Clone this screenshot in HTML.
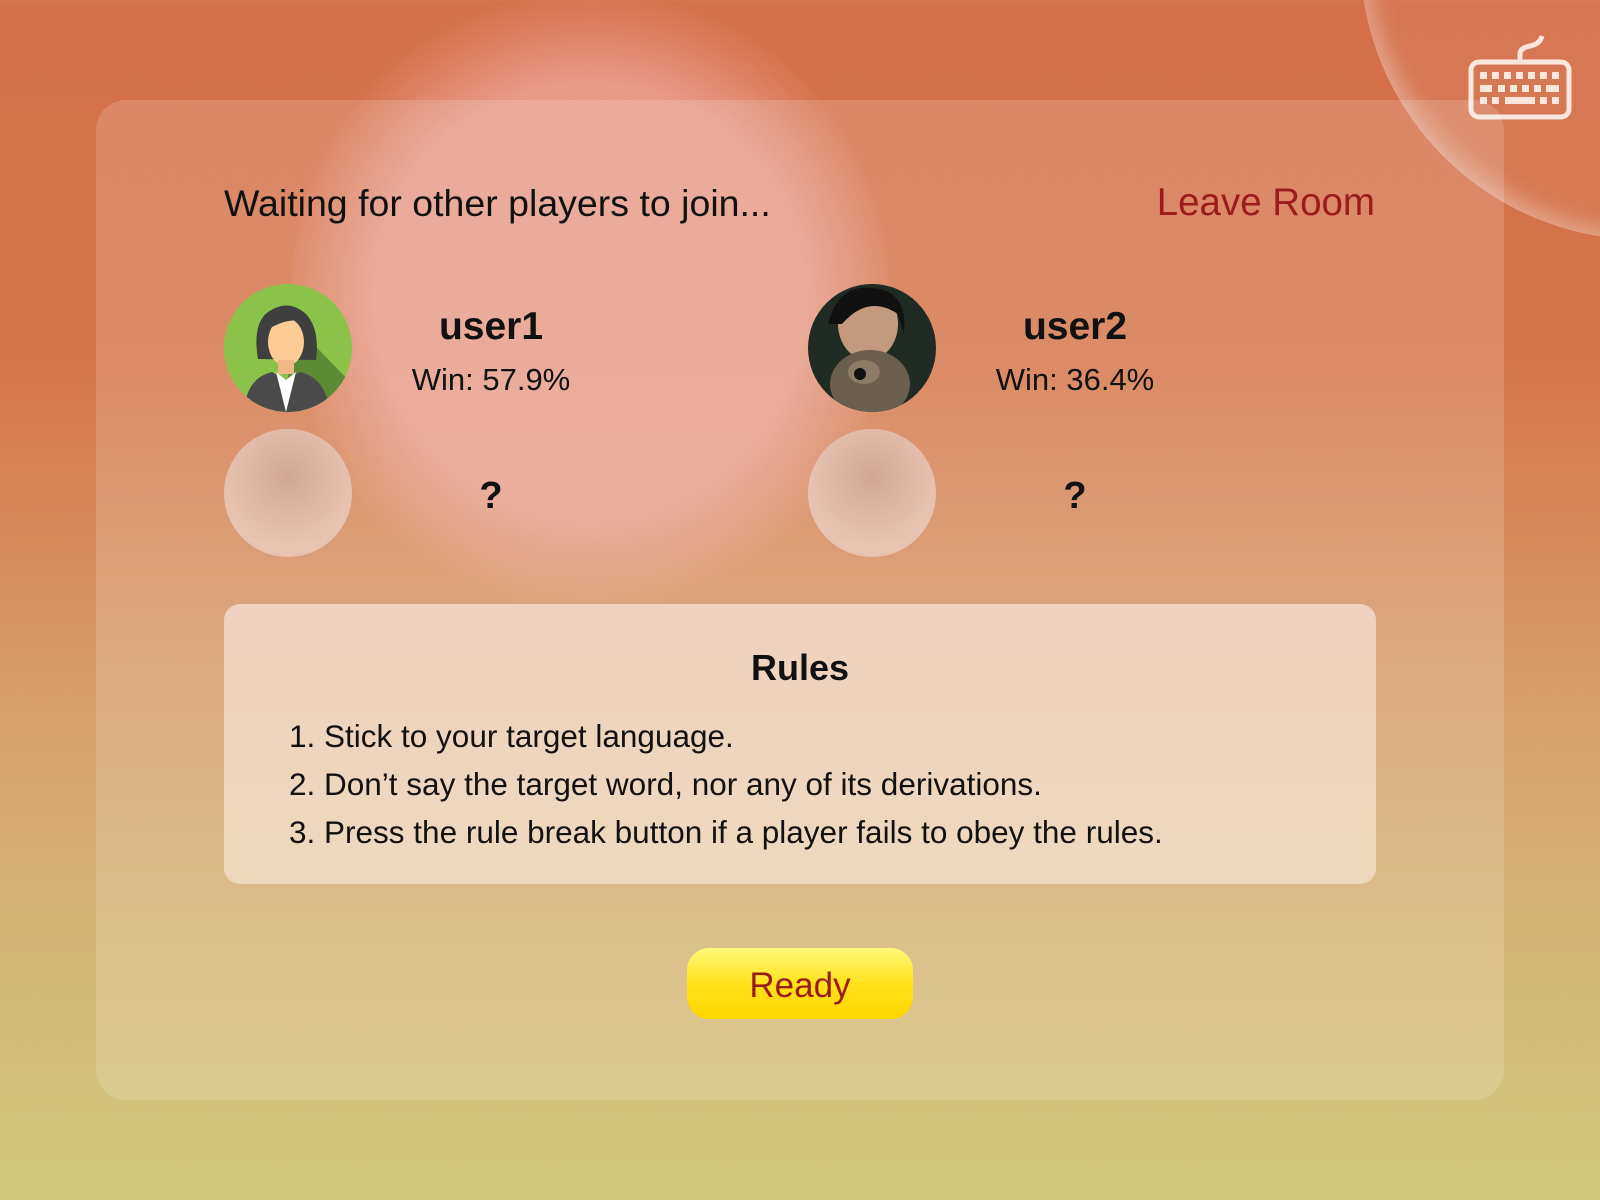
<!DOCTYPE html>
<html><head><meta charset="utf-8"><style>
html,body{margin:0;width:1600px;height:1200px;overflow:hidden;font-family:"Liberation Sans",sans-serif}
body{background:linear-gradient(180deg,#d4704a 0%,#d47549 30%,#d7a06c 60%,#d4b676 80%,#cfca7c 100%);position:relative}
.blob{position:absolute;left:290px;top:-10px;width:600px;height:620px;border-radius:50%;background:radial-gradient(circle,rgba(238,168,155,.75) 50%,rgba(238,168,155,0) 72%)}
.arc{position:absolute;left:1360px;top:-330px;width:570px;height:570px;border-radius:50%;background:rgba(255,255,255,.05);box-shadow:inset 14px -14px 26px -12px rgba(255,255,255,.4)}
.card{position:absolute;left:96px;top:100px;width:1408px;height:1000px;border-radius:30px;background:rgba(255,255,255,.16)}
.t{position:absolute;color:#111}
.av{position:absolute;width:128px;height:128px;border-radius:50%;overflow:hidden}
.ph{position:absolute;width:128px;height:128px;border-radius:50%;background:radial-gradient(circle at 50% 38%,rgba(210,170,150,.9),rgba(235,200,185,.9) 70%,rgba(240,205,190,.6))}
.c{text-align:center;width:300px}
.rules{position:absolute;left:224px;top:604px;width:1152px;height:280px;border-radius:16px;background:linear-gradient(180deg,#eed1bf,#eddabe)}
.li{position:absolute;left:65px;font-size:31.5px;color:#111}
.btn{position:absolute;left:687px;top:948px;width:226px;height:71px;border-radius:22px;background:linear-gradient(180deg,#fff87a,#ffe21a 50%,#ffd600);color:#9b1c1c;font-size:35px;text-align:center;line-height:76px}
</style></head><body>
<div class="blob"></div>
<div class="arc"></div>
<svg style="position:absolute;left:1468px;top:34px" width="104" height="88" viewBox="0 0 104 88" fill="none" stroke="#fbe6dc" stroke-width="5">
<path d="M52 28 V20 Q52 14 62 12 Q72 10 74 2"/>
<rect x="3" y="28" width="98" height="55" rx="8"/>
<g fill="#fbe6dc" stroke="none">
<rect x="12" y="38" width="7" height="7"/><rect x="24" y="38" width="7" height="7"/><rect x="36" y="38" width="7" height="7"/><rect x="48" y="38" width="7" height="7"/><rect x="60" y="38" width="7" height="7"/><rect x="72" y="38" width="7" height="7"/><rect x="84" y="38" width="7" height="7"/>
<rect x="12" y="51" width="12" height="7"/><rect x="30" y="51" width="7" height="7"/><rect x="42" y="51" width="7" height="7"/><rect x="54" y="51" width="7" height="7"/><rect x="66" y="51" width="7" height="7"/><rect x="78" y="51" width="13" height="7"/>
<rect x="12" y="63" width="7" height="7"/><rect x="24" y="63" width="7" height="7"/><rect x="37" y="63" width="30" height="7"/><rect x="72" y="63" width="7" height="7"/><rect x="84" y="63" width="7" height="7"/>
</g></svg>
<div class="card"></div>
<div class="t" style="left:224px;top:182px;font-size:37.5px">Waiting for other players to join...</div>
<div class="t" style="left:1100px;width:275px;text-align:right;top:181px;font-size:38.5px;color:#9b1c1c">Leave Room</div>

<div class="av" style="left:224px;top:284px">
<svg width="128" height="128" viewBox="0 0 128 128"><rect width="128" height="128" fill="#8bc34a"/><path d="M70 40 L128 100 V128 H60 Z" fill="#5c8a35"/>
<path d="M34 75 Q28 40 44 28 Q64 14 82 30 Q96 45 92 76 Z" fill="#3f3f3f"/>
<ellipse cx="62" cy="58" rx="18" ry="24" fill="#fccb96"/>
<path d="M42 40 Q60 20 84 42 Q72 30 46 44 Z" fill="#3f3f3f"/>
<rect x="54" y="76" width="16" height="14" fill="#f0b887"/>
<path d="M20 128 Q22 94 48 88 L62 96 L76 88 Q102 94 106 128 Z" fill="#4a4a4a"/>
<path d="M52 88 L62 128 L72 88 L62 96 Z" fill="#fff"/></svg></div>
<div class="t c" style="left:341px;top:305px;font-size:39px;font-weight:bold">user1</div>
<div class="t c" style="left:341px;top:362px;font-size:31px">Win: 57.9%</div>

<div class="av" style="left:808px;top:284px">
<svg width="128" height="128" viewBox="0 0 128 128"><rect width="128" height="128" fill="#1e2a22"/><ellipse cx="60" cy="40" rx="30" ry="36" fill="#c49a7e"/><path d="M20 40 Q30 0 64 4 Q100 6 96 50 L90 30 Q60 10 34 40 Z" fill="#111"/>
<ellipse cx="62" cy="100" rx="40" ry="34" fill="#6a5e4e"/><ellipse cx="56" cy="88" rx="16" ry="12" fill="#8c7c66"/><circle cx="52" cy="90" r="6" fill="#111"/></svg></div>
<div class="t c" style="left:925px;top:305px;font-size:39px;font-weight:bold">user2</div>
<div class="t c" style="left:925px;top:362px;font-size:31px">Win: 36.4%</div>

<div class="ph" style="left:224px;top:429px"></div>
<div class="ph" style="left:808px;top:429px"></div>
<div class="t c" style="left:341px;top:475px;font-size:38px;font-weight:bold">?</div>
<div class="t c" style="left:925px;top:475px;font-size:38px;font-weight:bold">?</div>

<div class="rules">
<div class="t" style="left:0;width:1152px;text-align:center;top:43px;font-size:36px;font-weight:bold">Rules</div>
<div class="li" style="top:114px">1. Stick to your target language.</div>
<div class="li" style="top:162px">2. Don’t say the target word, nor any of its derivations.</div>
<div class="li" style="top:210px">3. Press the rule break button if a player fails to obey the rules.</div>
</div>
<div class="btn">Ready</div>
</body></html>
